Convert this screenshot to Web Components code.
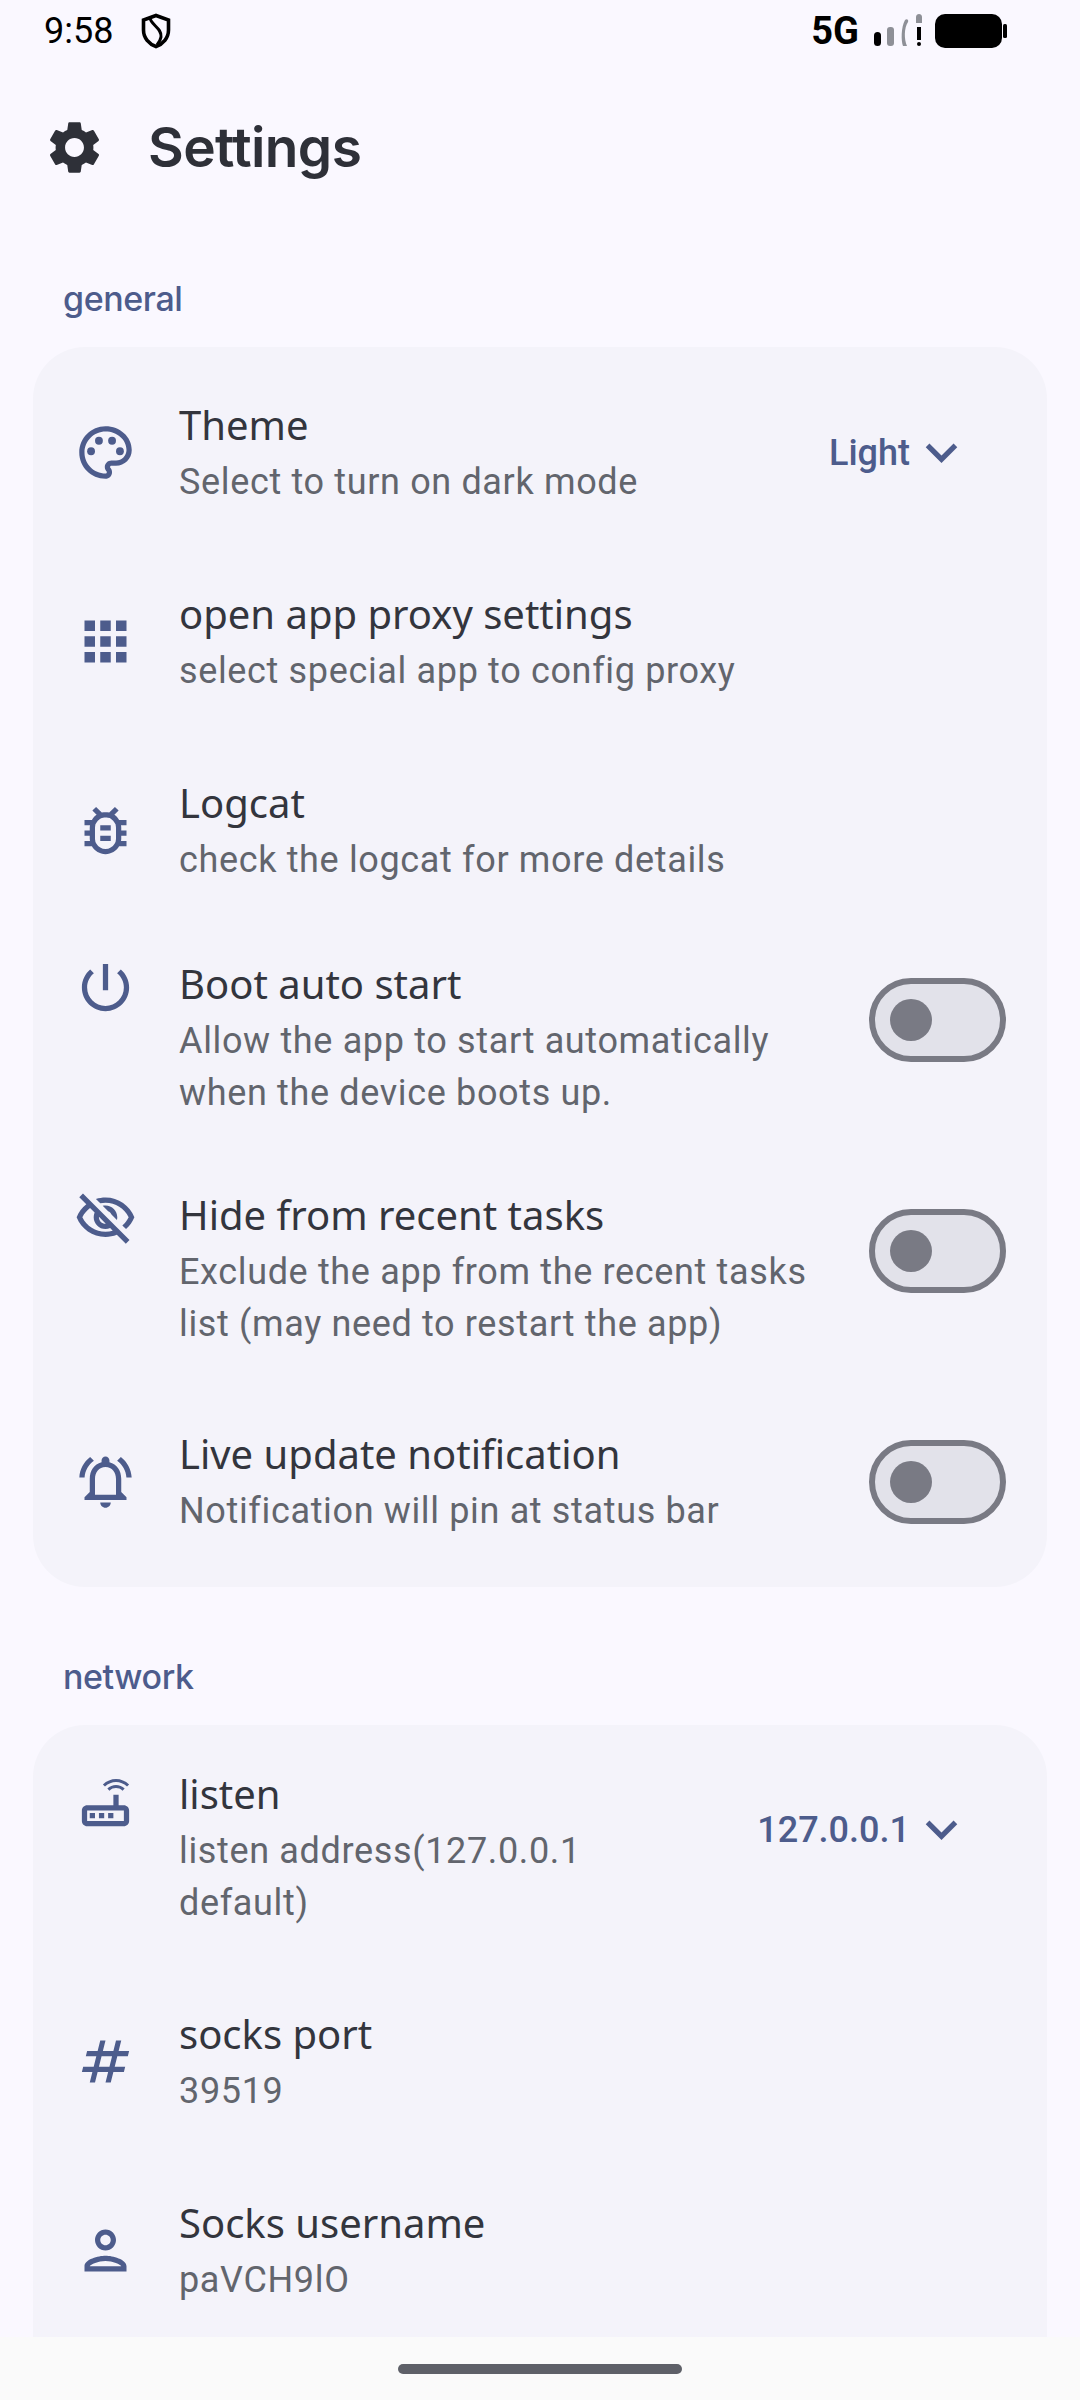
<!DOCTYPE html>
<html>
<head>
<meta charset="utf-8">
<style>
html, body { margin: 0; padding: 0; }
body {
  width: 1080px;
  height: 2400px;
  overflow: hidden;
  display: flex;
  flex-direction: column;
  background: #faf8ff;
  font-family: Inter, "Noto Sans", sans-serif;
}
</style>
</head>
<body>
<status-bar></status-bar>
<app-bar title="Settings"></app-bar>
<settings-list>
  <section-label>general</section-label>
  <settings-card>
    <setting-row icon="palette" title="Theme" sub="Select to turn on dark mode" pad="52" after="82" value="Light"></setting-row>
    <setting-row icon="apps" title="open app proxy settings" sub="select special app to config proxy" after="82"></setting-row>
    <setting-row icon="bug" title="Logcat" sub="check the logcat for more details" after="74"></setting-row>
    <setting-row icon="power" title="Boot auto start" sub="Allow the app to start automatically when the device boots up." after="72" toggle top></setting-row>
    <setting-row icon="eyeoff" title="Hide from recent tasks" sub="Exclude the app from the recent tasks list (may need to restart the app)" after="80" toggle top></setting-row>
    <setting-row icon="bell" title="Live update notification" sub="Notification will pin at status bar" after="52" toggle></setting-row>
  </settings-card>
  <section-label class="next">network</section-label>
  <settings-card>
    <setting-row icon="router" title="listen" sub="listen address(127.0.0.1 default)" pad="43" after="81" value="127.0.0.1" top></setting-row>
    <setting-row icon="hash" title="socks port" sub="39519" after="82"></setting-row>
    <setting-row icon="person" title="Socks username" sub="paVCH9lO" after="220"></setting-row>
  </settings-card>
</settings-list>
<nav-handle></nav-handle>

<script>
const ICONS = {
  palette: '<path d="M12 22C6.49 22 2 17.51 2 12S6.49 2 12 2s10 4.04 10 9c0 3.31-2.69 6-6 6h-1.77c-.28 0-.5.22-.5.5 0 .12.05.23.13.33.41.47.64 1.06.64 1.67 0 1.38-1.12 2.5-2.5 2.5zm0-18c-4.41 0-8 3.59-8 8s3.59 8 8 8c.28 0 .5-.22.5-.5 0-.16-.08-.28-.14-.35-.41-.46-.63-1.05-.63-1.65 0-1.38 1.12-2.5 2.5-2.5H16c2.21 0 4-1.79 4-4 0-3.86-3.59-7-8-7z"/><circle cx="6.5" cy="11.5" r="1.5"/><circle cx="9.5" cy="7.5" r="1.5"/><circle cx="14.5" cy="7.5" r="1.5"/><circle cx="17.5" cy="11.5" r="1.5"/>',
  apps: '<path d="M4 8h4V4H4v4zm6 12h4v-4h-4v4zm-6 0h4v-4H4v4zm0-6h4v-4H4v4zm6 0h4v-4h-4v4zm6-10v4h4V4h-4zm-6 4h4V4h-4v4zm6 6h4v-4h-4v4zm0 6h4v-4h-4v4z"/>',
  bug: '<path d="M20 8h-2.81c-.45-.78-1.07-1.45-1.82-1.96L17 4.41 15.59 3l-2.17 2.17C12.96 5.06 12.49 5 12 5s-.96.06-1.41.17L8.41 3 7 4.41l1.62 1.63C7.88 6.55 7.26 7.22 6.81 8H4v2h2.09c-.05.33-.09.66-.09 1v1H4v2h2v1c0 .34.04.67.09 1H4v2h2.81c1.04 1.79 2.97 3 5.19 3s4.15-1.21 5.19-3H20v-2h-2.09c.05-.33.09-.66.09-1v-1h2v-2h-2v-1c0-.34-.04-.67-.09-1H20V8zm-4 4v3c0 .22-.03.47-.07.7l-.1.65-.37.65c-.72 1.24-2.04 2-3.46 2s-2.74-.77-3.46-2l-.37-.64-.1-.65C8.03 15.48 8 15.23 8 15v-4c0-.23.03-.48.07-.7l.1-.65.37-.65c.3-.52.72-.97 1.21-1.31l.57-.39.74-.18c.31-.08.63-.12.94-.12.32 0 .63.04.95.12l.68.16.61.42c.5.34.91.78 1.21 1.31l.38.65.1.65c.04.22.07.47.07.69v1zm-6 2h4v2h-4zm0-4h4v2h-4z"/>',
  power: '<path d="M13 3h-2v10h2V3zm4.83 2.17l-1.42 1.42C17.99 7.86 19 9.81 19 12c0 3.87-3.13 7-7 7s-7-3.13-7-7c0-2.19 1.01-4.14 2.58-5.42L6.17 5.17C4.23 6.82 3 9.26 3 12c0 4.97 4.03 9 9 9s9-4.03 9-9c0-2.74-1.23-5.18-3.17-6.83z"/>',
  eyeoff: '<path d="M12 6c3.79 0 7.17 2.13 8.82 5.5-.59 1.22-1.42 2.27-2.41 3.12l1.41 1.41c1.39-1.23 2.49-2.77 3.18-4.53C21.27 7.11 17 4 12 4c-1.27 0-2.49.2-3.64.57l1.65 1.65C10.66 6.09 11.32 6 12 6zm-1.07 1.14L13 9.21c.57.25 1.03.71 1.28 1.28l2.07 2.07c.08-.34.14-.7.14-1.07C16.5 9.01 14.48 7 12 7c-.37 0-.72.05-1.07.14zM2.01 3.87l2.68 2.68C3.06 7.83 1.77 9.53 1 11.5 2.73 15.89 7 19 12 19c1.52 0 2.98-.29 4.32-.82l3.42 3.42 1.41-1.41L3.42 2.45 2.01 3.87zm7.5 7.5l2.61 2.61c-.04.01-.08.02-.12.02-1.38 0-2.5-1.12-2.5-2.5 0-.05.01-.08.01-.13zm-3.4-3.4l1.75 1.75c-.23.55-.36 1.15-.36 1.78 0 2.48 2.02 4.5 4.5 4.5.63 0 1.23-.13 1.77-.36l.98.98c-.88.24-1.8.38-2.75.38-3.79 0-7.17-2.13-8.82-5.5.7-1.43 1.72-2.61 2.93-3.53z"/>',
  bell: '<path d="M7.58 4.08L6.15 2.65C3.75 4.48 2.17 7.3 2.03 10.5h2c.15-2.65 1.51-4.97 3.55-6.42zM19.97 10.5h2c-.15-3.2-1.73-6.02-4.12-7.85l-1.42 1.43c2.02 1.45 3.39 3.77 3.54 6.42zM18 11c0-3.07-1.64-5.64-4.5-6.32V4c0-.83-.67-1.5-1.5-1.5s-1.5.67-1.5 1.5v.68C7.63 5.36 6 7.92 6 11v5l-2 2v1h16v-1l-2-2v-5zm-2 6H8v-6c0-2.48 1.51-4.5 4-4.5s4 2.02 4 4.5v6zm-4 5c1.1 0 2-.9 2-2h-4c0 1.1.9 2 2 2z"/>',
  router: '<path d="M20.2 5.9l.8-.8C19.6 3.7 17.8 3 16 3s-3.6.7-5 2.1l.8.8C13 4.8 14.5 4.2 16 4.2s3 .6 4.2 1.7zm-.9.8c-.9-.9-2.1-1.4-3.3-1.4s-2.4.5-3.3 1.4l.8.8c.7-.7 1.6-1 2.5-1 .9 0 1.8.3 2.5 1l.8-.8zM19 13h-2V9h-2v4H5c-1.1 0-2 .9-2 2v4c0 1.1.9 2 2 2h14c1.1 0 2-.9 2-2v-4c0-1.1-.9-2-2-2zm0 6H5v-4h14v4zM6 16h2v2H6zm3.5 0h2v2h-2zm3.5 0h2v2h-2z"/>',
  hash: '<path d="M20.5 10l.5-2h-4l1-4h-2l-1 4h-4l1-4h-2L9 8H5l-.5 2h4l-1 4h-4L3 16h4l-1 4h2l1-4h4l-1 4h2l1-4h4l.5-2h-4l1-4h4zm-7 4h-4l1-4h4l-1 4z"/>',
  person: '<path d="M12 6c1.1 0 2 .9 2 2s-.9 2-2 2-2-.9-2-2 .9-2 2-2m0 10c2.7 0 5.8 1.29 6 2H6c.23-.72 3.31-2 6-2m0-12C9.79 4 8 5.79 8 8s1.79 4 4 4 4-1.79 4-4-1.79-4-4-4zm0 10c-2.67 0-8 1.34-8 4v2h16v-2c0-2.66-5.33-4-8-4z"/>',
  gear: '<path d="M19.14 12.94c.04-.3.06-.61.06-.94 0-.32-.02-.64-.07-.94l2.03-1.58c.18-.14.23-.41.12-.61l-1.92-3.32c-.12-.22-.37-.29-.59-.22l-2.39.96c-.5-.38-1.03-.7-1.62-.94l-.36-2.54c-.04-.24-.24-.41-.48-.41h-3.84c-.24 0-.43.17-.47.41l-.36 2.54c-.59.24-1.13.57-1.62.94l-2.39-.96c-.22-.08-.47 0-.59.22L2.74 8.87c-.12.21-.08.47.12.61l2.03 1.58c-.05.3-.09.63-.09.94s.02.64.07.94l-2.03 1.58c-.18.14-.23.41-.12.61l1.92 3.32c.12.22.37.29.59.22l2.39-.96c.5.38 1.03.7 1.62.94l.36 2.54c.05.24.24.41.48.41h3.84c.24 0 .44-.17.47-.41l.36-2.54c.59-.24 1.13-.56 1.62-.94l2.39.96c.22.08.47 0 .59-.22l1.92-3.32c.12-.22.07-.47-.12-.61l-2.01-1.58zM12 15.6c-1.98 0-3.6-1.62-3.6-3.6s1.62-3.6 3.6-3.6 3.6 1.62 3.6 3.6-1.62 3.6-3.6 3.6z"/>',
  chevron: '<path d="M16.59 8.59L12 13.17 7.41 8.59 6 10l6 6 6-6z"/>'
}

function svgIcon (name, size) {
  return `<svg width="${size}" height="${size}" viewBox="0 0 24 24" fill="currentColor">${ICONS[name]}</svg>`
}

/*
 * Android status bar.
 */
customElements.define('status-bar',
  class extends HTMLElement {
    constructor () {
      super()
      this.attachShadow({ mode: 'open' }).innerHTML = `
        <style>
          :host { display: flex; align-items: center; height: 62px; padding: 0 71px 0 44px; color: #000; flex: none; font-family: Roboto, sans-serif; }
          .time { font-size: 36px; line-height: 62px; width: 97px; }
          .spacer { flex: 1; }
          .net { font-size: 38px; font-weight: 700; line-height: 62px; margin-right: 13px; }
          svg { display: block; }
        </style>
        <span class="time">9:58</span>
        <svg width="30" height="36" viewBox="0 0 30 36" fill="none" stroke="#000" stroke-width="3.6">
          <path d="M15 2.5 L27.5 7 V17 C27.5 25 22 31 15 33.5 C8 31 2.5 25 2.5 17 V7 Z"/>
          <path d="M9 5 C10 12 21 15 20 24 C19.6 27 18 29.5 16 32" stroke-width="3"/>
        </svg>
        <span class="spacer"></span>
        <span class="net">5G</span>
        <svg width="54" height="36" viewBox="-4 0 54 36">
          <rect x="-2" y="19" width="7" height="14" rx="3.5" fill="#000"/>
          <rect x="11" y="14" width="7" height="19" rx="3" fill="#8e9097"/>
          <path d="M29 7 C31 5 33 7 32 9 C28 15 28 26 31 33 H27 C25 28 25 14 29 7 Z" fill="#8e9097"/>
          <path d="M40 4 C40 0 46 0 46 4 V10 H40 Z" fill="#8e9097"/>
          <rect x="41" y="14" width="4" height="13" fill="#000"/>
          <rect x="41" y="29" width="4" height="4" rx="2" fill="#000"/>
        </svg>
        <svg width="75" height="36" viewBox="0 0 75 36" style="margin-left:8px">
          <rect x="1" y="1" width="67" height="34" rx="10" fill="#000"/>
          <rect x="69" y="11" width="4" height="14" rx="1.5" fill="#000"/>
        </svg>`
    }
  }
)

/*
 * Top app bar with the settings icon and the page title.
 */
customElements.define('app-bar',
  class extends HTMLElement {
    constructor () {
      super()
      this.attachShadow({ mode: 'open' }).innerHTML = `
        <style>
          :host { display: flex; align-items: center; height: 170px; padding-left: 43px; flex: none; color: #2e3038; }
          svg { display: block; margin-right: 42px; }
          h1 { margin: 0; font: 600 55px/64px Inter, sans-serif; letter-spacing: -.6px; }
        </style>
        ${svgIcon('gear', 63)}
        <h1>${this.getAttribute('title')}</h1>`
    }
  }
)

/*
 * Scrolling area of the page, cut off by the navigation bar.
 */
customElements.define('settings-list',
  class extends HTMLElement {
    constructor () {
      super()
      this.attachShadow({ mode: 'open' }).innerHTML = `
        <style>
          :host { display: block; flex: 1; min-height: 0; overflow: hidden; padding: 0 33px; }
        </style>
        <slot></slot>`
    }
  }
)

customElements.define('section-label',
  class extends HTMLElement {
    constructor () {
      super()
      this.attachShadow({ mode: 'open' }).innerHTML = `
        <style>
          :host { display: block; height: 115px; box-sizing: border-box; padding: 43px 0 0 30px; color: #4d5c8c; font: 500 34px/48px Inter, sans-serif; letter-spacing: -.4px; }
          :host(.next) { margin-top: 23px; }
        </style>
        <slot></slot>`
    }
  }
)

customElements.define('settings-card',
  class extends HTMLElement {
    constructor () {
      super()
      this.attachShadow({ mode: 'open' }).innerHTML = `
        <style>
          :host { display: block; background: #f4f3fa; border-radius: 52px; }
        </style>
        <slot></slot>`
    }
  }
)

customElements.define('toggle-switch',
  class extends HTMLElement {
    constructor () {
      super()
      this.attachShadow({ mode: 'open' }).innerHTML = `
        <style>
          :host { display: flex; align-items: center; box-sizing: border-box; width: 137px; height: 84px; border: 6px solid #797a84; border-radius: 42px; background: #e2e2ea; padding-left: 15px; flex: none; }
          span { display: block; width: 42px; height: 42px; border-radius: 50%; background: #797a84; }
        </style>
        <span></span>`
    }
  }
)

/*
 * One row of a settings card: icon, title, subtitle and an optional
 * dropdown value or toggle at the end.
 */
customElements.define('setting-row',
  class extends HTMLElement {
    constructor () {
      super()
      const pad = this.getAttribute('pad') || 0
      const after = this.getAttribute('after') || 0
      const value = this.getAttribute('value')
      let trailing = ''
      if (value) {
        trailing = `<div class="value"><span>${value}</span>${svgIcon('chevron', 63)}</div>`
      } else if (this.hasAttribute('toggle')) {
        trailing = '<toggle-switch></toggle-switch>'
      }
      this.attachShadow({ mode: 'open' }).innerHTML = `
        <style>
          :host { display: flex; align-items: center; padding: ${pad}px 41px ${after}px 41px; }
          :host([top]) { align-items: flex-start; }
          .icon { flex: none; width: 63px; height: 63px; margin-right: 42px; color: #4d5c8c; }
          :host([top]) .icon { margin-top: -2px; }
          :host([top][value]) .icon { margin-top: 3px; }
          svg { display: block; }
          .text { flex: 1; min-width: 0; }
          :host([value]) .text { flex: none; width: 470px; }
          .title { font: 400 40px/52px "Noto Sans", sans-serif; color: #33353d; }
          .sub { font: 400 36px/52px Roboto, sans-serif; letter-spacing: .65px; color: #62656d; margin: 5px 0 -2px; }
          .value { display: flex; align-items: center; color: #4d5c8c; font: 500 36px/52px Roboto, sans-serif; margin-right: 33px; flex: none; margin-left: auto; }
          :host([top][value]) .value { margin-top: 30px; }
          toggle-switch { margin-left: 26px; }
          :host([top]) toggle-switch { margin-top: 20px; }
        </style>
        <div class="icon">${svgIcon(this.getAttribute('icon'), 63)}</div>
        <div class="text">
          <div class="title">${this.getAttribute('title')}</div>
          <div class="sub">${this.getAttribute('sub')}</div>
        </div>
        ${trailing}`
    }
  }
)

customElements.define('nav-handle',
  class extends HTMLElement {
    constructor () {
      super()
      this.attachShadow({ mode: 'open' }).innerHTML = `
        <style>
          :host { display: flex; justify-content: center; box-sizing: border-box; height: 63px; padding-top: 27px; background: #fafafa; flex: none; }
          span { display: block; width: 284px; height: 10px; border-radius: 5px; background: #5e6068; }
        </style>
        <span></span>`
    }
  }
)
</script>
</body>
</html>
